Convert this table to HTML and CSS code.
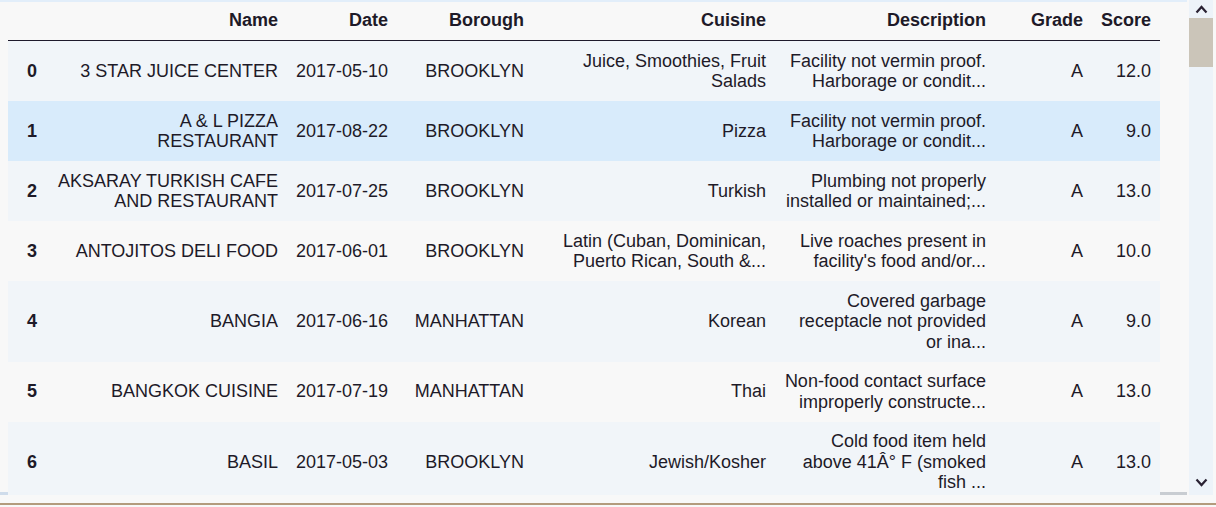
FILE: index.html
```html
<!DOCTYPE html>
<html>
<head>
<meta charset="utf-8">
<link rel="stylesheet" href="styles.css">
</head>
<body>
<div class="window">
  <div class="viewport">
    <div class="scrollarea">
      <table class="dataframe">
        <colgroup>
          <col class="c-idx"><col class="c-name"><col class="c-date"><col class="c-boro"><col class="c-cuis"><col class="c-desc"><col class="c-grade"><col class="c-score">
        </colgroup>
        <thead>
          <tr><th></th><th>Name</th><th>Date</th><th>Borough</th><th>Cuisine</th><th>Description</th><th>Grade</th><th>Score</th></tr>
        </thead>
        <tbody>
          <tr class="stripe"><th>0</th><td>3 STAR JUICE CENTER</td><td>2017-05-10</td><td>BROOKLYN</td><td>Juice, Smoothies, Fruit<br>Salads</td><td>Facility not vermin proof.<br>Harborage or condit...</td><td>A</td><td>12.0</td></tr>
          <tr class="hover"><th>1</th><td>A &amp; L PIZZA<br>RESTAURANT</td><td>2017-08-22</td><td>BROOKLYN</td><td>Pizza</td><td>Facility not vermin proof.<br>Harborage or condit...</td><td>A</td><td>9.0</td></tr>
          <tr class="stripe"><th>2</th><td>AKSARAY TURKISH CAFE<br>AND RESTAURANT</td><td>2017-07-25</td><td>BROOKLYN</td><td>Turkish</td><td>Plumbing not properly<br>installed or maintained;...</td><td>A</td><td>13.0</td></tr>
          <tr><th>3</th><td>ANTOJITOS DELI FOOD</td><td>2017-06-01</td><td>BROOKLYN</td><td>Latin (Cuban, Dominican,<br>Puerto Rican, South &amp;...</td><td>Live roaches present in<br>facility's food and/or...</td><td>A</td><td>10.0</td></tr>
          <tr class="stripe"><th>4</th><td>BANGIA</td><td>2017-06-16</td><td>MANHATTAN</td><td>Korean</td><td>Covered garbage<br>receptacle not provided<br>or ina...</td><td>A</td><td>9.0</td></tr>
          <tr><th>5</th><td>BANGKOK CUISINE</td><td>2017-07-19</td><td>MANHATTAN</td><td>Thai</td><td>Non-food contact surface<br>improperly constructe...</td><td>A</td><td>13.0</td></tr>
          <tr class="stripe"><th>6</th><td>BASIL</td><td>2017-05-03</td><td>BROOKLYN</td><td>Jewish/Kosher</td><td>Cold food item held<br>above 41Â° F (smoked<br>fish ...</td><td>A</td><td>13.0</td></tr>
        </tbody>
      </table>
      <div class="hbar hbar-left"></div>
      <div class="hbar hbar-right"></div>
    </div>
    <div class="vscroll">
      <div class="arrow">
        <svg width="13" height="9" viewBox="0 0 13 9"><polyline points="1.5,7.5 6.5,2 11.5,7.5" fill="none" stroke="#2a2233" stroke-width="2.2"/></svg>
      </div>
      <div class="thumb"></div>
      <div class="track"></div>
      <div class="arrow">
        <svg width="13" height="9" viewBox="0 0 13 9"><polyline points="1.5,1.5 6.5,7 11.5,1.5" fill="none" stroke="#2a2233" stroke-width="2.2"/></svg>
      </div>
    </div>
  </div>
  <div class="footer-line"></div>
</div>
</body>
</html>
```
FILE: styles.css
```css
html, body {
  margin: 0;
  padding: 0;
  background: #f8f8f8;
}

.window {
  width: 1216px;
  height: 507px;
  background: #f8f8f8;
  display: flex;
  flex-direction: column;
}

.viewport {
  display: flex;
  height: 495px;
}

.scrollarea {
  position: relative;
  width: 1187px;
  height: 493px;
  overflow: hidden;
  border-top: 2px solid #e2eefa;
  padding-left: 8px;
  box-sizing: border-box;
  height: 495px;
}

.dataframe {
  border-collapse: collapse;
  table-layout: fixed;
  width: 1152px;
  font-family: "Liberation Sans", Arial, sans-serif;
  font-size: 18px;
  line-height: 20.5px;
  color: #1e1a28;
}

.c-idx { width: 38px; }
.c-name { width: 241px; }
.c-date { width: 110px; }
.c-boro { width: 136px; }
.c-cuis { width: 242px; }
.c-desc { width: 220px; }
.c-grade { width: 97px; }
.c-score { width: 68px; }

.dataframe th,
.dataframe td {
  padding: 9.5px 9px;
  text-align: right;
  vertical-align: middle;
  white-space: nowrap;
}

.dataframe thead th {
  font-weight: bold;
  padding-top: 8px;
  padding-bottom: 9.5px;
  border-bottom: 1px solid #1e1a2c;
}

.dataframe tbody th {
  font-weight: bold;
  text-align: left;
  padding-left: 19px;
  padding-right: 0;
}

.dataframe tbody tr.stripe {
  background: #f1f5f9;
}

.dataframe tbody tr.hover {
  background: #d8ebfb;
}

.hbar {
  position: absolute;
  bottom: 0;
  height: 3px;
  background: #cfdceb;
}

.hbar-left {
  left: 0;
  width: 8px;
}

.hbar-right {
  left: 1160px;
  width: 28px;
  background: #c9cdd2;
}

.vscroll {
  width: 24px;
  margin-left: 2px;
  margin-right: 3px;
  background: #edf3f9;
  display: flex;
  flex-direction: column;
  padding-bottom: 4px;
  box-sizing: border-box;
}

.arrow {
  height: 18px;
  display: flex;
  align-items: center;
  justify-content: center;
}

.thumb {
  height: 49px;
  background: #cbc5b9;
}

.track {
  flex: 1;
}

.footer-line {
  margin-top: 8px;
  height: 2px;
  background: #b39b7d;
}
```
